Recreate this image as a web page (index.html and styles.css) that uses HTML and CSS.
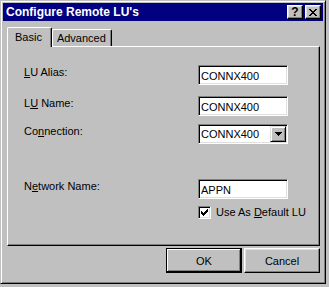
FILE: index.html
```html
<!DOCTYPE html>
<html lang="en">

<head>
    <meta charset="UTF-8">
    <meta name="viewport" content="width=device-width, initial-scale=1.0">
    <title>Configure Remote LU's</title>
    <link rel="stylesheet" href="styles.css">
</head>

<body>
    <div class="window">
        <div class="titlebar">
            <span class="title">Configure Remote LU's</span>
            <div class="title-buttons">
                <button class="title-btn help">?</button>
                <button class="title-btn close">
                    <svg width="8" height="7" viewBox="0 0 8 7" shape-rendering="crispEdges">
                        <path d="M0 0h2v1H0z M6 0h2v1H6z M1 1h2v1H1z M5 1h2v1H5z M2 2h4v1H2z M3 3h2v1H3z M2 4h4v1H2z M1 5h2v1H1z M5 5h2v1H5z M0 6h2v1H0z M6 6h2v1H6z" fill="#000" />
                    </svg>
                </button>
            </div>
        </div>

        <!-- Tab -->
        <div class="tabs">
            <div class="tab active">Basic</div>
            <div class="tab advanced">Advanced</div>
        </div>

        <div class="panel">
            <div class="row">
                <label class="field-label"><u>L</u>U Alias:</label>
                <input class="field" type="text" value="CONNX400">
            </div>
            <div class="row">
                <label class="field-label">L<u>U</u> Name:</label>
                <input class="field" type="text" value="CONNX400">
            </div>
            <div class="row combo-row">
                <label class="field-label">Co<u>n</u>nection:</label>
                <div class="combo">
                    <span class="combo-value">CONNX400</span>
                    <span class="combo-btn">
                        <svg width="7" height="4" viewBox="0 0 7 4" shape-rendering="crispEdges">
                            <path d="M0 0h7v1H0z M1 1h5v1H1z M2 2h3v1H2z M3 3h1v1H3z" fill="#000" />
                        </svg>
                    </span>
                </div>
            </div>
            <div class="row network-row">
                <label class="field-label">N<u>e</u>twork Name:</label>
                <input class="field" type="text" value="APPN">
            </div>
            <div class="check-row">
                <span class="checkbox">
                    <svg width="7" height="7" viewBox="0 0 7 7" shape-rendering="crispEdges">
                        <path d="M6 0h1v1H6z M5 1h2v1H5z M0 2h1v1H0z M4 2h3v1H4z M0 3h2v1H0z M3 3h3v1H3z M0 4h5v1H0z M1 5h3v1H1z M2 6h1v1H2z" fill="#000" />
                    </svg>
                </span>
                <span class="check-label">Use As <u>D</u>efault LU</span>
            </div>
        </div>

        <div class="actions">
            <button class="btn default">OK</button>
            <button class="btn">Cancel</button>
        </div>
    </div>
</body>

</html>
```

FILE: styles.css
```css
/* Dasar */
body {
    margin: 0;
    background: #c0c0c0;
    font-family: "Liberation Sans", Arial, sans-serif;
    font-size: 11px;
    color: #000;
}

.window {
    width: 326px;
    height: 284px;
    box-sizing: border-box;
    padding: 2px;
    border: 1px solid;
    border-color: #c0c0c0 #000 #000 #c0c0c0;
    box-shadow: inset 1px 1px #fff, inset -1px -1px #808080;
    background: #c0c0c0;
}

.titlebar {
    display: flex;
    align-items: center;
    justify-content: space-between;
    height: 18px;
    padding: 0 2px 0 3px;
    background: #000080;
    color: white;
}

.title {
    font-weight: bold;
    font-size: 12px;
    line-height: 18px;
}

.title-buttons {
    display: flex;
    gap: 2px;
}

.title-btn {
    display: flex;
    align-items: center;
    justify-content: center;
    width: 16px;
    height: 14px;
    padding: 0;
    background: #c0c0c0;
    border: 1px solid;
    border-color: #fff #000 #000 #fff;
    box-shadow: inset -1px -1px #808080, inset 1px 1px #dfdfdf;
    color: #000;
    font-family: "Liberation Sans", Arial, sans-serif;
    font-weight: bold;
    font-size: 12px;
    line-height: 12px;
}

/* Tab */
.tabs {
    display: flex;
    align-items: flex-end;
    margin: 6px 0 0 4px;
}

.tab {
    padding: 2px 5px 1px 4px;
    line-height: 13px;
    border: 1px solid;
    border-bottom: 0;
    border-color: #fff #000 #000 #fff;
    border-radius: 2px 2px 0 0;
    box-shadow: inset -1px 0 #808080;
    background: #c0c0c0;
}

.tab.active {
    position: relative;
    z-index: 1;
    padding: 3px 9px 3px 7px;
    margin-bottom: -1px;
}

.panel {
    width: 313px;
    height: 200px;
    box-sizing: border-box;
    margin-left: 4px;
    padding: 18px 0 0 16px;
    border: 1px solid;
    border-color: #fff #000 #000 #fff;
    box-shadow: inset -1px -1px #808080;
}

.row {
    display: flex;
    align-items: flex-start;
    margin-top: 11px;
}

.row:first-child {
    margin-top: 0;
}

.row.combo-row {
    margin-top: 8px;
}

.row.network-row {
    margin-top: 35px;
}

.field-label {
    width: 174px;
    padding-top: 1px;
    line-height: 13px;
}

.field,
.combo,
.checkbox {
    box-sizing: border-box;
    border: 1px solid;
    border-color: #808080 #fff #fff #808080;
    box-shadow: inset 1px 1px #000, inset -1px -1px #dfdfdf;
    background: white;
}

.field {
    width: 90px;
    height: 20px;
    margin: 0;
    padding: 2px 2px 0;
    font-family: "Liberation Sans", Arial, sans-serif;
    font-size: 11px;
    color: #000;
    outline: none;
}

.combo {
    display: flex;
    width: 90px;
    height: 20px;
    padding: 1px;
}

.combo-value {
    flex: 1;
    padding-left: 1px;
    line-height: 16px;
}

.combo-btn {
    display: flex;
    align-items: center;
    justify-content: center;
    width: 16px;
    height: 16px;
    box-sizing: border-box;
    border: 1px solid;
    border-color: #dfdfdf #000 #000 #dfdfdf;
    box-shadow: inset 1px 1px #fff, inset -1px -1px #808080;
    background: #c0c0c0;
}

.check-row {
    display: flex;
    align-items: center;
    margin: 7px 0 0 174px;
}

.checkbox {
    display: flex;
    align-items: center;
    justify-content: center;
    width: 13px;
    height: 13px;
}

.check-label {
    margin-left: 5px;
    line-height: 13px;
}

.actions {
    display: flex;
    justify-content: flex-end;
    gap: 2px;
    margin: 2px 3px 0 0;
}

.btn {
    width: 76px;
    height: 25px;
    padding: 0;
    background: #c0c0c0;
    border: 1px solid;
    border-color: #fff #000 #000 #fff;
    box-shadow: inset -1px -1px #808080, inset 1px 1px #dfdfdf;
    font-family: "Liberation Sans", Arial, sans-serif;
    font-size: 11px;
    color: #000;
}

.btn.default {
    border-color: #000;
    box-shadow: inset -1px -1px #000, inset 1px 1px #fff, inset -2px -2px #808080;
}
```
